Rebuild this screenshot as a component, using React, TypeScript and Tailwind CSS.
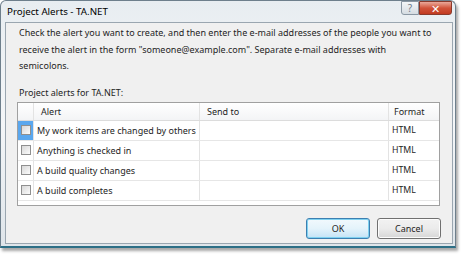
import { useState } from "react";

const alerts = [
  "My work items are changed by others",
  "Anything is checked in",
  "A build quality changes",
  "A build completes",
];

const Checkbox = ({ checked, onClick }: { checked: boolean; onClick: () => void }) => (
  <div
    onClick={onClick}
    className="w-[10px] h-[10px] border border-[#8f8f8f] bg-gradient-to-br from-[#d8d8d8] to-[#fbfbfb] flex items-center justify-center cursor-pointer"
  >
    {checked && <span className="text-[8px] leading-none text-[#333]">✓</span>}
  </div>
);

const App = () => {
  const [checked, setChecked] = useState<boolean[]>([false, false, false, false]);

  const toggle = (i: number) => {
    const next = [...checked];
    next[i] = !next[i];
    setChecked(next);
  };

  return (
    <div
      className="w-[461px] h-[254px] bg-white"
      style={{ fontFamily: '"Noto Sans", "DejaVu Sans", sans-serif' }}
    >
      <div className="w-[456px] h-[248px] rounded-t-[6px] border border-[#6e7f8c] border-b-[2px] border-b-[#2d6f86] bg-gradient-to-b from-[#e8edf1] via-[#f4f6f8] to-[#dfe5ea] shadow-[2px_3px_3px_rgba(0,0,0,0.35)] flex flex-col">
        {/* title bar */}
        <div className="h-[21px] flex items-start justify-between pl-[6px] pr-[3px]">
          <div className="text-[9.75px] leading-[20px] text-black pt-[1px]">Project Alerts - TA.NET</div>
          <div className="flex">
            <div className="w-[18px] h-[14px] border border-[#8a97a3] rounded-bl-[3px] bg-gradient-to-b from-[#f4f6f8] to-[#d5dce2] flex items-center justify-center text-[10px] leading-none text-[#6d7a86]">
              ?
            </div>
            <div className="w-[33px] h-[14px] border border-[#8a3a2c] rounded-br-[3px] bg-gradient-to-b from-[#e9a89a] via-[#d1533a] to-[#c23a20] flex items-center justify-center text-[11px] font-bold leading-none text-white">
              ✕
            </div>
          </div>
        </div>

        {/* client area */}
        <div className="flex-1 ml-[4px] mr-[2px] mb-[2px] border border-[#9aa6b0] bg-[#f0f0f0] flex flex-col pl-[11px] pr-[12px] pt-[2px]">
          <p className="text-[9px] leading-[16.5px] text-[#1e1e1e] pl-[2px] whitespace-nowrap">
            Check the alert you want to create, and then enter the e-mail addresses of the people you want to
            <br />
            receive the alert in the form "someone@example.com". Separate e-mail addresses with
            <br />
            semicolons.
          </p>

          <div className="text-[9px] leading-[16px] text-[#1e1e1e] pl-[2px] mt-[10px]">Project alerts for TA.NET:</div>

          <div className="mt-[1px] h-[104px] border border-[#a0a0a0] bg-white flex flex-col">
            <div className="h-[18px] flex border-b border-[#dcdcdc] bg-gradient-to-b from-[#ffffff] to-[#f3f4f6] text-[9px] leading-[18px] text-[#1e1e1e]">
              <div className="w-[16px] border-r border-[#e3e3e3]" />
              <div className="w-[166px] border-r border-[#e3e3e3] pl-[7px]">Alert</div>
              <div className="w-[189px] border-r border-[#e3e3e3] pl-[7px]">Send to</div>
              <div className="flex-1 pl-[5px]">Format</div>
            </div>
            {alerts.map((a, i) => (
              <div key={a} className="h-[20px] flex border-b border-[#e6e6e6] text-[9px] leading-[19px] text-[#1e1e1e]">
                <div
                  className={`w-[16px] border-r border-[#e3e3e3] flex items-center justify-center ${
                    i === 0 ? "bg-[#5aa7ee]" : ""
                  }`}
                >
                  <Checkbox checked={checked[i]} onClick={() => toggle(i)} />
                </div>
                <div className="w-[166px] border-r border-[#e3e3e3] pl-[3px] whitespace-nowrap overflow-hidden">{a}</div>
                <div className="w-[189px] border-r border-[#e3e3e3]" />
                <div className="flex-1 pl-[3px] text-[8.75px]">HTML</div>
              </div>
            ))}
          </div>

          <div className="flex justify-end gap-[7px] mt-[12px] -mr-[1px]">
            <button className="w-[64px] h-[21px] rounded-[3px] border border-[#3c7fb1] bg-gradient-to-b from-[#f2f9fd] via-[#e4f3fb] to-[#c4e3f6] shadow-[inset_0_0_0_1px_#7fd1f0] text-[9px] leading-none text-[#1e1e1e]">
              OK
            </button>
            <button className="w-[64px] h-[21px] rounded-[3px] border border-[#707070] bg-gradient-to-b from-[#f2f2f2] via-[#ebebeb] to-[#d6d6d6] shadow-[inset_0_0_0_1px_#fcfcfc] text-[9px] leading-none text-[#1e1e1e]">
              Cancel
            </button>
          </div>
        </div>
      </div>
    </div>
  );
};

export default App;
